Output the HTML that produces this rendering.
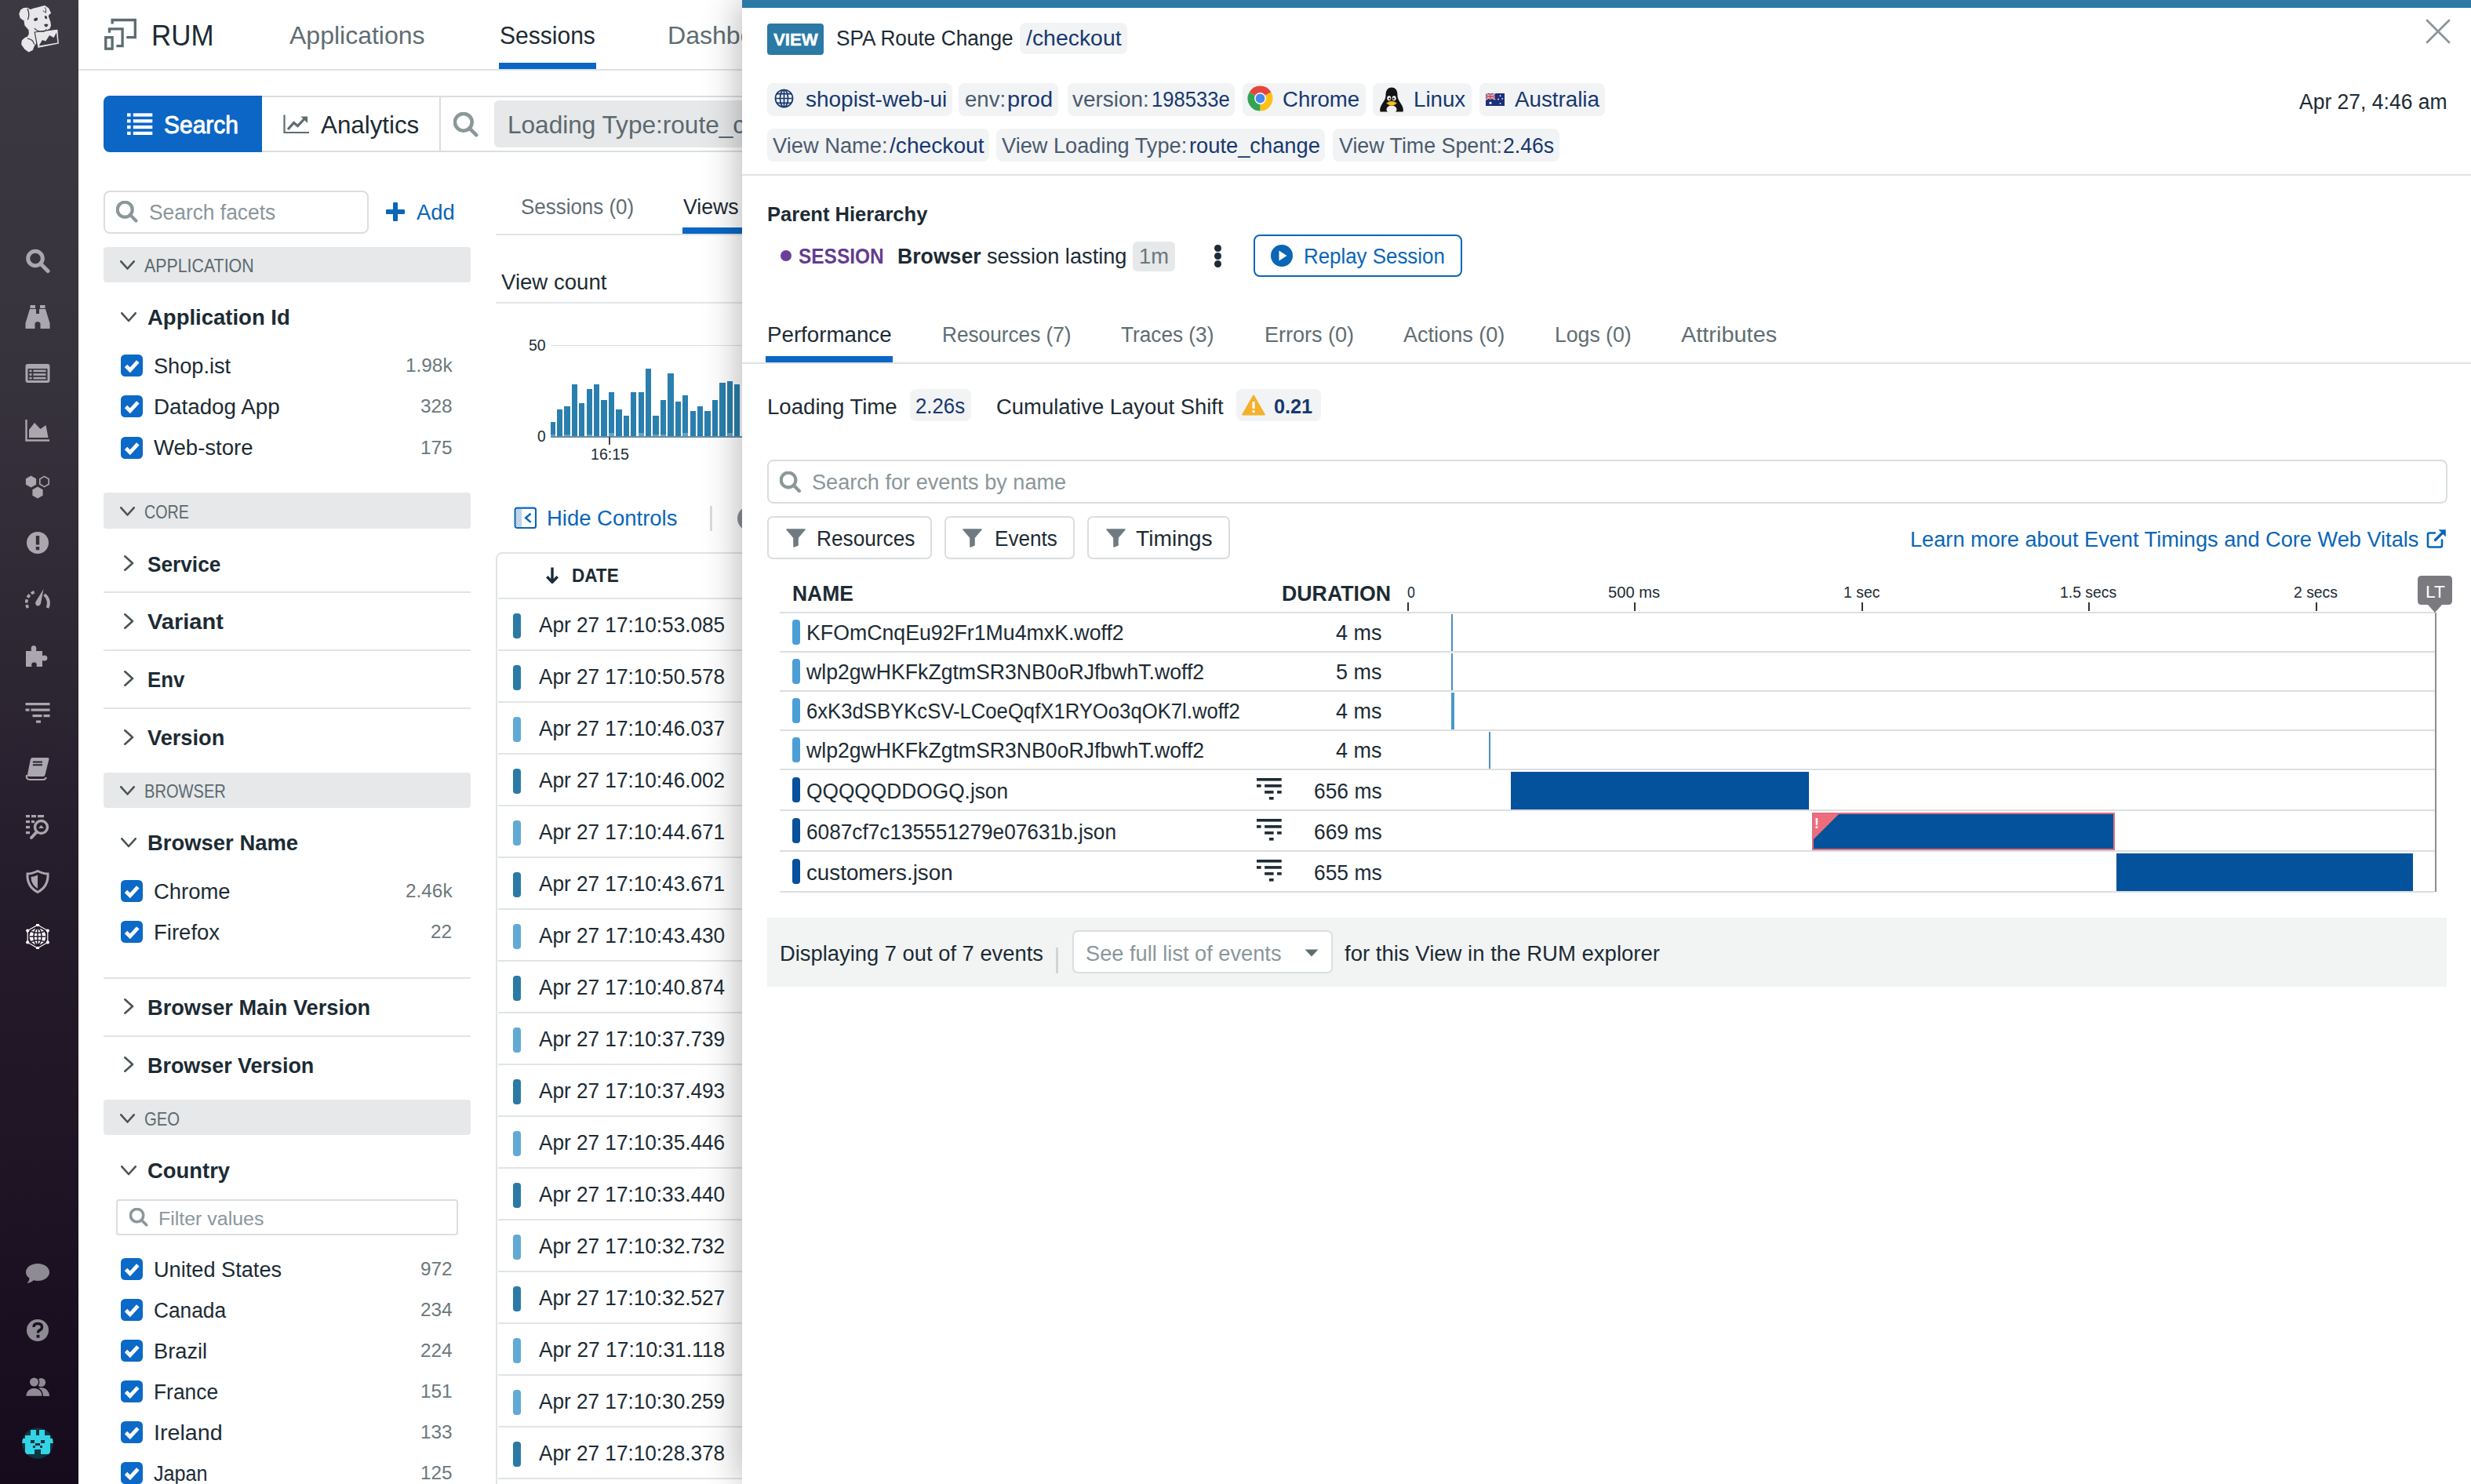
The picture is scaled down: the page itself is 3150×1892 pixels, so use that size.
<!DOCTYPE html>
<html lang="en"><head><meta charset="utf-8"><title>RUM Sessions</title>
<style>
html,body{margin:0;padding:0;background:#fff;}
body{width:3150px;height:1892px;position:relative;overflow:hidden;font-family:"Liberation Sans", sans-serif;}
.a{position:absolute;box-sizing:border-box;}
.t{position:absolute;white-space:nowrap;line-height:1;transform-origin:0 0;display:block;}
</style></head>
<body>
<div class="a" style="left:0px;top:0px;width:100px;height:1892px;background:linear-gradient(#3c3942 0%,#37333d 25%,#251c2b 60%,#160b1d 100%);"></div>
<div class="a" style="left:100px;top:88px;width:900px;height:2px;background:#dfe3e5;"></div>
<span class="t" style="left:192.6px;top:27.0px;font-size:37.08px;color:#1c2b34;transform:scaleX(0.9416);">RUM</span>
<span class="t" style="left:369.1px;top:31.0px;font-size:30.9px;color:#5f6d72;transform:scaleX(1.0359);">Applications</span>
<span class="t" style="left:637.1px;top:31.0px;font-size:30.9px;color:#1c2b34;transform:scaleX(0.9722);">Sessions</span>
<div class="a" style="left:636px;top:80px;width:124px;height:8px;background:#0b66c5;"></div>
<span class="t" style="left:850.6px;top:31.0px;font-size:30.9px;color:#5f6d72;transform:scaleX(1.0380);">Dashboards</span>
<div class="a" style="left:132px;top:122px;width:900px;height:72px;border:2px solid #dadee0;border-radius:8px 0 0 8px;"></div>
<div class="a" style="left:132px;top:122px;width:202px;height:72px;background:#0b66c5;border-radius:8px 0 0 8px;"></div>
<span class="t" style="left:208.7px;top:145.0px;font-size:30.9px;color:#fff;transform:scaleX(0.9700);-webkit-text-stroke:0.9px #fff;">Search</span>
<span class="t" style="left:409.0px;top:145.0px;font-size:30.9px;color:#1c2b34;transform:scaleX(1.0133);">Analytics</span>
<div class="a" style="left:560px;top:124px;width:2px;height:68px;background:#dadee0;"></div>
<div class="a" style="left:630px;top:128px;width:400px;height:60px;background:#e6e8e9;border-radius:6px;"></div>
<span class="t" style="left:646.8px;top:145.0px;font-size:30.9px;color:#5c6970;transform:scaleX(1.0220);">Loading Type:route_change</span>
<div class="a" style="left:132px;top:242.5px;width:337.5px;height:55px;background:#fff;border:2px solid #dadee0;border-radius:8px;"></div>
<span class="t" style="left:190.0px;top:258.0px;font-size:26.78px;color:#8b969a;transform:scaleX(0.9850);">Search facets</span>
<span class="t" style="left:530.8px;top:258.0px;font-size:26.78px;color:#0a66b7;transform:scaleX(1.0227);">Add</span>
<div class="a" style="left:132px;top:314.5px;width:468px;height:45.3px;background:#e6e8e9;border-radius:4px;"></div>
<span class="t" style="left:183.9px;top:328.0px;font-size:23.18px;color:#5c6970;transform:scaleX(0.9213);">APPLICATION</span>
<svg class="a" style="left:152.5px;top:332px;" width="19" height="12" viewBox="0 0 19 12"><path d="M1.3 1.3 L9.5 10.5 L17.7 1.3" fill="none" stroke="#4a5459" stroke-width="2.6" stroke-linecap="round" stroke-linejoin="round"/></svg>
<span class="t" style="left:187.5px;top:392.0px;font-size:26.78px;color:#1c2b34;font-weight:700;transform:scaleX(1.0274);">Application Id</span>
<svg class="a" style="left:154px;top:398.1px;" width="20" height="12.5" viewBox="0 0 20 12.5"><path d="M1.3 1.3 L10 11 L18.7 1.3" fill="none" stroke="#4a5459" stroke-width="2.6" stroke-linecap="round" stroke-linejoin="round"/></svg>
<div class="a" style="left:154px;top:452px;width:28px;height:28px;background:#0b69c7;border-radius:5.5px;"></div>
<svg class="a" style="left:154px;top:452px;" width="28" height="28" viewBox="0 0 28 28"><path d="M6.5 14.5 L11.8 19.8 L21.8 8.8" fill="none" stroke="#fff" stroke-width="4.8" stroke-linecap="butt" stroke-linejoin="miter"/></svg>
<span class="t" style="left:195.7px;top:454.0px;font-size:26.78px;color:#1c2b34;transform:scaleX(1.0144);">Shop.ist</span>
<span class="t" style="left:516.7px;top:454.0px;font-size:24.72px;color:#6b777c;transform:scaleX(0.9850);">1.98k</span>
<div class="a" style="left:154px;top:504px;width:28px;height:28px;background:#0b69c7;border-radius:5.5px;"></div>
<svg class="a" style="left:154px;top:504px;" width="28" height="28" viewBox="0 0 28 28"><path d="M6.5 14.5 L11.8 19.8 L21.8 8.8" fill="none" stroke="#fff" stroke-width="4.8" stroke-linecap="butt" stroke-linejoin="miter"/></svg>
<span class="t" style="left:195.7px;top:506.0px;font-size:26.78px;color:#1c2b34;transform:scaleX(1.0376);">Datadog App</span>
<span class="t" style="left:535.6px;top:506.0px;font-size:24.72px;color:#6b777c;transform:scaleX(0.9850);">328</span>
<div class="a" style="left:154px;top:556.5px;width:28px;height:28px;background:#0b69c7;border-radius:5.5px;"></div>
<svg class="a" style="left:154px;top:556.5px;" width="28" height="28" viewBox="0 0 28 28"><path d="M6.5 14.5 L11.8 19.8 L21.8 8.8" fill="none" stroke="#fff" stroke-width="4.8" stroke-linecap="butt" stroke-linejoin="miter"/></svg>
<span class="t" style="left:195.7px;top:558.0px;font-size:26.78px;color:#1c2b34;transform:scaleX(1.0296);">Web-store</span>
<span class="t" style="left:535.6px;top:559.0px;font-size:24.72px;color:#6b777c;transform:scaleX(0.9850);">175</span>
<div class="a" style="left:132px;top:628.3px;width:468px;height:45.3px;background:#e6e8e9;border-radius:4px;"></div>
<span class="t" style="left:183.9px;top:642.0px;font-size:23.18px;color:#5c6970;transform:scaleX(0.8482);">CORE</span>
<svg class="a" style="left:152.5px;top:645.8px;" width="19" height="12" viewBox="0 0 19 12"><path d="M1.3 1.3 L9.5 10.5 L17.7 1.3" fill="none" stroke="#4a5459" stroke-width="2.6" stroke-linecap="round" stroke-linejoin="round"/></svg>
<span class="t" style="left:187.5px;top:707.0px;font-size:26.78px;color:#1c2b34;font-weight:700;transform:scaleX(0.9796);">Service</span>
<svg class="a" style="left:158.3px;top:708px;" width="12.5" height="20" viewBox="0 0 12.5 20"><path d="M1.3 1.3 L11 10 L1.3 18.7" fill="none" stroke="#4a5459" stroke-width="2.6" stroke-linecap="round" stroke-linejoin="round"/></svg>
<div class="a" style="left:132px;top:754px;width:468px;height:2px;background:#e0e4e6;"></div>
<span class="t" style="left:187.5px;top:780.0px;font-size:26.78px;color:#1c2b34;font-weight:700;transform:scaleX(1.0845);">Variant</span>
<svg class="a" style="left:158.3px;top:781.5px;" width="12.5" height="20" viewBox="0 0 12.5 20"><path d="M1.3 1.3 L11 10 L1.3 18.7" fill="none" stroke="#4a5459" stroke-width="2.6" stroke-linecap="round" stroke-linejoin="round"/></svg>
<div class="a" style="left:132px;top:828px;width:468px;height:2px;background:#e0e4e6;"></div>
<span class="t" style="left:187.5px;top:854.0px;font-size:26.78px;color:#1c2b34;font-weight:700;transform:scaleX(0.9636);">Env</span>
<svg class="a" style="left:158.3px;top:855px;" width="12.5" height="20" viewBox="0 0 12.5 20"><path d="M1.3 1.3 L11 10 L1.3 18.7" fill="none" stroke="#4a5459" stroke-width="2.6" stroke-linecap="round" stroke-linejoin="round"/></svg>
<div class="a" style="left:132px;top:902px;width:468px;height:2px;background:#e0e4e6;"></div>
<span class="t" style="left:187.5px;top:928.0px;font-size:26.78px;color:#1c2b34;font-weight:700;transform:scaleX(1.0166);">Version</span>
<svg class="a" style="left:158.3px;top:929.7px;" width="12.5" height="20" viewBox="0 0 12.5 20"><path d="M1.3 1.3 L11 10 L1.3 18.7" fill="none" stroke="#4a5459" stroke-width="2.6" stroke-linecap="round" stroke-linejoin="round"/></svg>
<div class="a" style="left:132px;top:984.5px;width:468px;height:45.3px;background:#e6e8e9;border-radius:4px;"></div>
<span class="t" style="left:183.9px;top:998.0px;font-size:23.18px;color:#5c6970;transform:scaleX(0.8668);">BROWSER</span>
<svg class="a" style="left:152.5px;top:1002px;" width="19" height="12" viewBox="0 0 19 12"><path d="M1.3 1.3 L9.5 10.5 L17.7 1.3" fill="none" stroke="#4a5459" stroke-width="2.6" stroke-linecap="round" stroke-linejoin="round"/></svg>
<span class="t" style="left:187.5px;top:1062.0px;font-size:26.78px;color:#1c2b34;font-weight:700;transform:scaleX(1.0248);">Browser Name</span>
<svg class="a" style="left:154px;top:1068.1px;" width="20" height="12.5" viewBox="0 0 20 12.5"><path d="M1.3 1.3 L10 11 L18.7 1.3" fill="none" stroke="#4a5459" stroke-width="2.6" stroke-linecap="round" stroke-linejoin="round"/></svg>
<div class="a" style="left:154px;top:1122px;width:28px;height:28px;background:#0b69c7;border-radius:5.5px;"></div>
<svg class="a" style="left:154px;top:1122px;" width="28" height="28" viewBox="0 0 28 28"><path d="M6.5 14.5 L11.8 19.8 L21.8 8.8" fill="none" stroke="#fff" stroke-width="4.8" stroke-linecap="butt" stroke-linejoin="miter"/></svg>
<span class="t" style="left:195.7px;top:1124.0px;font-size:26.78px;color:#1c2b34;transform:scaleX(1.0252);">Chrome</span>
<span class="t" style="left:516.7px;top:1124.0px;font-size:24.72px;color:#6b777c;transform:scaleX(0.9850);">2.46k</span>
<div class="a" style="left:154px;top:1174px;width:28px;height:28px;background:#0b69c7;border-radius:5.5px;"></div>
<svg class="a" style="left:154px;top:1174px;" width="28" height="28" viewBox="0 0 28 28"><path d="M6.5 14.5 L11.8 19.8 L21.8 8.8" fill="none" stroke="#fff" stroke-width="4.8" stroke-linecap="butt" stroke-linejoin="miter"/></svg>
<span class="t" style="left:195.7px;top:1176.0px;font-size:26.78px;color:#1c2b34;transform:scaleX(1.0280);">Firefox</span>
<span class="t" style="left:549.2px;top:1176.0px;font-size:24.72px;color:#6b777c;transform:scaleX(0.9850);">22</span>
<div class="a" style="left:132px;top:1246px;width:468px;height:2px;background:#e0e4e6;"></div>
<span class="t" style="left:187.5px;top:1272.0px;font-size:26.78px;color:#1c2b34;font-weight:700;transform:scaleX(1.0163);">Browser Main Version</span>
<svg class="a" style="left:158.3px;top:1273px;" width="12.5" height="20" viewBox="0 0 12.5 20"><path d="M1.3 1.3 L11 10 L1.3 18.7" fill="none" stroke="#4a5459" stroke-width="2.6" stroke-linecap="round" stroke-linejoin="round"/></svg>
<div class="a" style="left:132px;top:1320px;width:468px;height:2px;background:#e0e4e6;"></div>
<span class="t" style="left:187.5px;top:1346.0px;font-size:26.78px;color:#1c2b34;font-weight:700;transform:scaleX(1.0050);">Browser Version</span>
<svg class="a" style="left:158.3px;top:1347px;" width="12.5" height="20" viewBox="0 0 12.5 20"><path d="M1.3 1.3 L11 10 L1.3 18.7" fill="none" stroke="#4a5459" stroke-width="2.6" stroke-linecap="round" stroke-linejoin="round"/></svg>
<div class="a" style="left:132px;top:1402px;width:468px;height:45.3px;background:#e6e8e9;border-radius:4px;"></div>
<span class="t" style="left:183.9px;top:1416.0px;font-size:23.18px;color:#5c6970;transform:scaleX(0.8772);">GEO</span>
<svg class="a" style="left:152.5px;top:1419.5px;" width="19" height="12" viewBox="0 0 19 12"><path d="M1.3 1.3 L9.5 10.5 L17.7 1.3" fill="none" stroke="#4a5459" stroke-width="2.6" stroke-linecap="round" stroke-linejoin="round"/></svg>
<span class="t" style="left:187.5px;top:1480.0px;font-size:26.78px;color:#1c2b34;font-weight:700;transform:scaleX(1.0245);">Country</span>
<svg class="a" style="left:154px;top:1486.1px;" width="20" height="12.5" viewBox="0 0 20 12.5"><path d="M1.3 1.3 L10 11 L18.7 1.3" fill="none" stroke="#4a5459" stroke-width="2.6" stroke-linecap="round" stroke-linejoin="round"/></svg>
<div class="a" style="left:148px;top:1528.5px;width:435.5px;height:46.5px;background:#fff;border:2px solid #dadee0;border-radius:4px;"></div>
<span class="t" style="left:202.1px;top:1542.0px;font-size:24.72px;color:#8b969a;transform:scaleX(1.0085);">Filter values</span>
<div class="a" style="left:154px;top:1603.7px;width:28px;height:28px;background:#0b69c7;border-radius:5.5px;"></div>
<svg class="a" style="left:154px;top:1603.7px;" width="28" height="28" viewBox="0 0 28 28"><path d="M6.5 14.5 L11.8 19.8 L21.8 8.8" fill="none" stroke="#fff" stroke-width="4.8" stroke-linecap="butt" stroke-linejoin="miter"/></svg>
<span class="t" style="left:195.7px;top:1606.0px;font-size:26.78px;color:#1c2b34;transform:scaleX(1.0151);">United States</span>
<span class="t" style="left:535.6px;top:1606.0px;font-size:24.72px;color:#6b777c;transform:scaleX(0.9850);">972</span>
<div class="a" style="left:154px;top:1656px;width:28px;height:28px;background:#0b69c7;border-radius:5.5px;"></div>
<svg class="a" style="left:154px;top:1656px;" width="28" height="28" viewBox="0 0 28 28"><path d="M6.5 14.5 L11.8 19.8 L21.8 8.8" fill="none" stroke="#fff" stroke-width="4.8" stroke-linecap="butt" stroke-linejoin="miter"/></svg>
<span class="t" style="left:195.7px;top:1658.0px;font-size:26.78px;color:#1c2b34;transform:scaleX(0.9823);">Canada</span>
<span class="t" style="left:535.6px;top:1658.0px;font-size:24.72px;color:#6b777c;transform:scaleX(0.9850);">234</span>
<div class="a" style="left:154px;top:1708px;width:28px;height:28px;background:#0b69c7;border-radius:5.5px;"></div>
<svg class="a" style="left:154px;top:1708px;" width="28" height="28" viewBox="0 0 28 28"><path d="M6.5 14.5 L11.8 19.8 L21.8 8.8" fill="none" stroke="#fff" stroke-width="4.8" stroke-linecap="butt" stroke-linejoin="miter"/></svg>
<span class="t" style="left:195.7px;top:1710.0px;font-size:26.78px;color:#1c2b34;transform:scaleX(1.0175);">Brazil</span>
<span class="t" style="left:535.6px;top:1710.0px;font-size:24.72px;color:#6b777c;transform:scaleX(0.9850);">224</span>
<div class="a" style="left:154px;top:1760px;width:28px;height:28px;background:#0b69c7;border-radius:5.5px;"></div>
<svg class="a" style="left:154px;top:1760px;" width="28" height="28" viewBox="0 0 28 28"><path d="M6.5 14.5 L11.8 19.8 L21.8 8.8" fill="none" stroke="#fff" stroke-width="4.8" stroke-linecap="butt" stroke-linejoin="miter"/></svg>
<span class="t" style="left:195.7px;top:1762.0px;font-size:26.78px;color:#1c2b34;transform:scaleX(0.9855);">France</span>
<span class="t" style="left:535.6px;top:1762.0px;font-size:24.72px;color:#6b777c;transform:scaleX(0.9850);">151</span>
<div class="a" style="left:154px;top:1812px;width:28px;height:28px;background:#0b69c7;border-radius:5.5px;"></div>
<svg class="a" style="left:154px;top:1812px;" width="28" height="28" viewBox="0 0 28 28"><path d="M6.5 14.5 L11.8 19.8 L21.8 8.8" fill="none" stroke="#fff" stroke-width="4.8" stroke-linecap="butt" stroke-linejoin="miter"/></svg>
<span class="t" style="left:195.7px;top:1814.0px;font-size:26.78px;color:#1c2b34;transform:scaleX(1.0704);">Ireland</span>
<span class="t" style="left:535.6px;top:1814.0px;font-size:24.72px;color:#6b777c;transform:scaleX(0.9850);">133</span>
<div class="a" style="left:154px;top:1864px;width:28px;height:28px;background:#0b69c7;border-radius:5.5px;"></div>
<svg class="a" style="left:154px;top:1864px;" width="28" height="28" viewBox="0 0 28 28"><path d="M6.5 14.5 L11.8 19.8 L21.8 8.8" fill="none" stroke="#fff" stroke-width="4.8" stroke-linecap="butt" stroke-linejoin="miter"/></svg>
<span class="t" style="left:195.7px;top:1866.0px;font-size:26.78px;color:#1c2b34;transform:scaleX(0.9406);">Japan</span>
<span class="t" style="left:535.6px;top:1866.0px;font-size:24.72px;color:#6b777c;transform:scaleX(0.9850);">125</span>
<span class="t" style="left:663.7px;top:251.0px;font-size:26.78px;color:#5f6d72;transform:scaleX(0.9687);">Sessions (0)</span>
<span class="t" style="left:871.2px;top:251.0px;font-size:26.78px;color:#1c2b34;transform:scaleX(0.9956);">Views</span>
<div class="a" style="left:632px;top:298px;width:400px;height:2px;background:#dfe3e5;"></div>
<div class="a" style="left:870px;top:290px;width:160px;height:8px;background:#0b66c5;"></div>
<span class="t" style="left:639.4px;top:347.0px;font-size:26.78px;color:#1c2b34;transform:scaleX(1.0303);">View count</span>
<div class="a" style="left:632px;top:384.5px;width:400px;height:2px;background:#e4e7e9;"></div>
<span class="t" style="left:674.2px;top:431.0px;font-size:19.57px;color:#1c2b34;transform:scaleX(0.9958);">50</span>
<span class="t" style="left:685.2px;top:547.0px;font-size:19.57px;color:#1c2b34;transform:scaleX(0.9801);">0</span>
<span class="t" style="left:752.6px;top:570.0px;font-size:19.57px;color:#1c2b34;transform:scaleX(1.0001);">16:15</span>
<div class="a" style="left:702px;top:440px;width:330px;height:1px;background:#dcdfe1;"></div>
<div class="a" style="left:702px;top:556px;width:330px;height:1.5px;background:#6b8ea3;"></div>
<div class="a" style="left:776px;top:557px;width:1.5px;height:10px;background:#444;"></div>
<div class="a" style="left:702.00px;top:538.2px;width:5.70px;height:18.2px;background:#2a7fae"></div><div class="a" style="left:702.00px;top:554.4px;width:5.70px;height:2px;background:#5ea3cb"></div><div class="a" style="left:709.83px;top:522.0px;width:7.30px;height:34.4px;background:#2a7fae"></div><div class="a" style="left:719.26px;top:518.1px;width:7.30px;height:38.3px;background:#2a7fae"></div><div class="a" style="left:719.26px;top:554.4px;width:7.30px;height:2px;background:#5ea3cb"></div><div class="a" style="left:728.69px;top:490.1px;width:7.30px;height:66.3px;background:#2a7fae"></div><div class="a" style="left:738.12px;top:514.1px;width:7.30px;height:42.3px;background:#2a7fae"></div><div class="a" style="left:747.55px;top:496.1px;width:7.30px;height:60.3px;background:#2a7fae"></div><div class="a" style="left:747.55px;top:554.4px;width:7.30px;height:2px;background:#5ea3cb"></div><div class="a" style="left:756.98px;top:490.1px;width:7.30px;height:66.3px;background:#2a7fae"></div><div class="a" style="left:766.41px;top:510.2px;width:7.30px;height:46.2px;background:#2a7fae"></div><div class="a" style="left:775.84px;top:500.1px;width:7.30px;height:56.3px;background:#2a7fae"></div><div class="a" style="left:775.84px;top:552.4px;width:7.30px;height:4px;background:#5ea3cb"></div><div class="a" style="left:785.27px;top:522.0px;width:7.30px;height:34.4px;background:#2a7fae"></div><div class="a" style="left:794.70px;top:530.1px;width:7.30px;height:26.3px;background:#2a7fae"></div><div class="a" style="left:804.13px;top:500.1px;width:7.30px;height:56.3px;background:#2a7fae"></div><div class="a" style="left:813.56px;top:500.1px;width:7.30px;height:56.3px;background:#2a7fae"></div><div class="a" style="left:813.56px;top:552.4px;width:7.30px;height:4px;background:#5ea3cb"></div><div class="a" style="left:822.99px;top:470.1px;width:7.30px;height:86.3px;background:#2a7fae"></div><div class="a" style="left:832.42px;top:530.1px;width:7.30px;height:26.3px;background:#2a7fae"></div><div class="a" style="left:832.42px;top:554.4px;width:7.30px;height:2px;background:#5ea3cb"></div><div class="a" style="left:841.85px;top:510.2px;width:7.30px;height:46.2px;background:#2a7fae"></div><div class="a" style="left:841.85px;top:554.4px;width:7.30px;height:2px;background:#5ea3cb"></div><div class="a" style="left:851.28px;top:476.2px;width:7.30px;height:80.2px;background:#2a7fae"></div><div class="a" style="left:860.71px;top:512.1px;width:7.30px;height:44.3px;background:#2a7fae"></div><div class="a" style="left:870.14px;top:504.1px;width:7.30px;height:52.3px;background:#2a7fae"></div><div class="a" style="left:870.14px;top:552.4px;width:7.30px;height:4px;background:#5ea3cb"></div><div class="a" style="left:879.57px;top:524.0px;width:7.30px;height:32.4px;background:#2a7fae"></div><div class="a" style="left:889.00px;top:518.1px;width:7.30px;height:38.3px;background:#2a7fae"></div><div class="a" style="left:898.43px;top:524.0px;width:7.30px;height:32.4px;background:#2a7fae"></div><div class="a" style="left:907.86px;top:510.2px;width:7.30px;height:46.2px;background:#2a7fae"></div><div class="a" style="left:917.29px;top:488.1px;width:7.30px;height:68.3px;background:#2a7fae"></div><div class="a" style="left:926.72px;top:486.0px;width:7.30px;height:70.4px;background:#2a7fae"></div><div class="a" style="left:926.72px;top:552.4px;width:7.30px;height:4px;background:#5ea3cb"></div><div class="a" style="left:936.15px;top:490.1px;width:7.30px;height:66.3px;background:#2a7fae"></div><div class="a" style="left:945.58px;top:488.4px;width:7.30px;height:68.0px;background:#2a7fae"></div><div class="a" style="left:955.01px;top:492.4px;width:7.30px;height:64.0px;background:#2a7fae"></div>
<span class="t" style="left:697.2px;top:648.0px;font-size:26.78px;color:#0a66b7;transform:scaleX(1.0262);">Hide Controls</span>
<div class="a" style="left:904.5px;top:644.5px;width:3px;height:32.5px;background:#d8dcde;"></div>
<div class="a" style="left:939.5px;top:645px;width:32px;height:32px;background:#8b8f93;border-radius:16px;"></div>
<div class="a" style="left:632.3px;top:704.3px;width:420px;height:1300px;background:#fff;border:2px solid #e0e4e6;border-radius:8px 0 0 0;"></div>
<span class="t" style="left:729.1px;top:722.0px;font-size:24.72px;color:#1c2b34;font-weight:700;transform:scaleX(0.9116);">DATE</span>
<svg class="a" style="left:694.8px;top:722px;" width="18" height="24" viewBox="0 0 18 24"><path d="M9 1.4 V20 M2.3 13.3 L9 20.3 L15.7 13.3" fill="none" stroke="#1c2b34" stroke-width="3.4" stroke-linecap="butt" stroke-linejoin="round"/></svg>
<div class="a" style="left:635px;top:762px;width:420px;height:2px;background:#e0e4e6;"></div>
<div class="a" style="left:654.4px;top:782px;width:9.6px;height:31.7px;background:#2a7aa6;border-radius:4px;"></div>
<span class="t" style="left:687.2px;top:784.0px;font-size:26.78px;color:#1c2b34;transform:scaleX(0.9774);">Apr 27 17:10:53.085</span>
<div class="a" style="left:635px;top:828px;width:420px;height:2px;background:#e0e4e6;"></div>
<div class="a" style="left:654.4px;top:848px;width:9.6px;height:31.7px;background:#2a7aa6;border-radius:4px;"></div>
<span class="t" style="left:687.2px;top:850.0px;font-size:26.78px;color:#1c2b34;transform:scaleX(0.9774);">Apr 27 17:10:50.578</span>
<div class="a" style="left:635px;top:894px;width:420px;height:2px;background:#e0e4e6;"></div>
<div class="a" style="left:654.4px;top:914px;width:9.6px;height:31.7px;background:#62aad6;border-radius:4px;"></div>
<span class="t" style="left:687.2px;top:916.0px;font-size:26.78px;color:#1c2b34;transform:scaleX(0.9774);">Apr 27 17:10:46.037</span>
<div class="a" style="left:635px;top:960px;width:420px;height:2px;background:#e0e4e6;"></div>
<div class="a" style="left:654.4px;top:980px;width:9.6px;height:31.7px;background:#2a7aa6;border-radius:4px;"></div>
<span class="t" style="left:687.2px;top:982.0px;font-size:26.78px;color:#1c2b34;transform:scaleX(0.9774);">Apr 27 17:10:46.002</span>
<div class="a" style="left:635px;top:1026px;width:420px;height:2px;background:#e0e4e6;"></div>
<div class="a" style="left:654.4px;top:1046px;width:9.6px;height:31.7px;background:#62aad6;border-radius:4px;"></div>
<span class="t" style="left:687.2px;top:1048.0px;font-size:26.78px;color:#1c2b34;transform:scaleX(0.9774);">Apr 27 17:10:44.671</span>
<div class="a" style="left:635px;top:1092px;width:420px;height:2px;background:#e0e4e6;"></div>
<div class="a" style="left:654.4px;top:1112px;width:9.6px;height:31.7px;background:#2a7aa6;border-radius:4px;"></div>
<span class="t" style="left:687.2px;top:1114.0px;font-size:26.78px;color:#1c2b34;transform:scaleX(0.9774);">Apr 27 17:10:43.671</span>
<div class="a" style="left:635px;top:1158px;width:420px;height:2px;background:#e0e4e6;"></div>
<div class="a" style="left:654.4px;top:1178px;width:9.6px;height:31.7px;background:#62aad6;border-radius:4px;"></div>
<span class="t" style="left:687.2px;top:1180.0px;font-size:26.78px;color:#1c2b34;transform:scaleX(0.9774);">Apr 27 17:10:43.430</span>
<div class="a" style="left:635px;top:1224px;width:420px;height:2px;background:#e0e4e6;"></div>
<div class="a" style="left:654.4px;top:1244px;width:9.6px;height:31.7px;background:#2a7aa6;border-radius:4px;"></div>
<span class="t" style="left:687.2px;top:1246.0px;font-size:26.78px;color:#1c2b34;transform:scaleX(0.9774);">Apr 27 17:10:40.874</span>
<div class="a" style="left:635px;top:1290px;width:420px;height:2px;background:#e0e4e6;"></div>
<div class="a" style="left:654.4px;top:1310px;width:9.6px;height:31.7px;background:#62aad6;border-radius:4px;"></div>
<span class="t" style="left:687.2px;top:1312.0px;font-size:26.78px;color:#1c2b34;transform:scaleX(0.9774);">Apr 27 17:10:37.739</span>
<div class="a" style="left:635px;top:1356px;width:420px;height:2px;background:#e0e4e6;"></div>
<div class="a" style="left:654.4px;top:1376px;width:9.6px;height:31.7px;background:#2a7aa6;border-radius:4px;"></div>
<span class="t" style="left:687.2px;top:1378.0px;font-size:26.78px;color:#1c2b34;transform:scaleX(0.9774);">Apr 27 17:10:37.493</span>
<div class="a" style="left:635px;top:1422px;width:420px;height:2px;background:#e0e4e6;"></div>
<div class="a" style="left:654.4px;top:1442px;width:9.6px;height:31.7px;background:#62aad6;border-radius:4px;"></div>
<span class="t" style="left:687.2px;top:1444.0px;font-size:26.78px;color:#1c2b34;transform:scaleX(0.9774);">Apr 27 17:10:35.446</span>
<div class="a" style="left:635px;top:1488px;width:420px;height:2px;background:#e0e4e6;"></div>
<div class="a" style="left:654.4px;top:1508px;width:9.6px;height:31.7px;background:#2a7aa6;border-radius:4px;"></div>
<span class="t" style="left:687.2px;top:1510.0px;font-size:26.78px;color:#1c2b34;transform:scaleX(0.9774);">Apr 27 17:10:33.440</span>
<div class="a" style="left:635px;top:1554px;width:420px;height:2px;background:#e0e4e6;"></div>
<div class="a" style="left:654.4px;top:1574px;width:9.6px;height:31.7px;background:#62aad6;border-radius:4px;"></div>
<span class="t" style="left:687.2px;top:1576.0px;font-size:26.78px;color:#1c2b34;transform:scaleX(0.9774);">Apr 27 17:10:32.732</span>
<div class="a" style="left:635px;top:1620px;width:420px;height:2px;background:#e0e4e6;"></div>
<div class="a" style="left:654.4px;top:1640px;width:9.6px;height:31.7px;background:#2a7aa6;border-radius:4px;"></div>
<span class="t" style="left:687.2px;top:1642.0px;font-size:26.78px;color:#1c2b34;transform:scaleX(0.9774);">Apr 27 17:10:32.527</span>
<div class="a" style="left:635px;top:1686px;width:420px;height:2px;background:#e0e4e6;"></div>
<div class="a" style="left:654.4px;top:1706px;width:9.6px;height:31.7px;background:#62aad6;border-radius:4px;"></div>
<span class="t" style="left:687.2px;top:1708.0px;font-size:26.78px;color:#1c2b34;transform:scaleX(0.9855);">Apr 27 17:10:31.118</span>
<div class="a" style="left:635px;top:1752px;width:420px;height:2px;background:#e0e4e6;"></div>
<div class="a" style="left:654.4px;top:1772px;width:9.6px;height:31.7px;background:#62aad6;border-radius:4px;"></div>
<span class="t" style="left:687.2px;top:1774.0px;font-size:26.78px;color:#1c2b34;transform:scaleX(0.9774);">Apr 27 17:10:30.259</span>
<div class="a" style="left:635px;top:1818px;width:420px;height:2px;background:#e0e4e6;"></div>
<div class="a" style="left:654.4px;top:1838px;width:9.6px;height:31.7px;background:#2a7aa6;border-radius:4px;"></div>
<span class="t" style="left:687.2px;top:1840.0px;font-size:26.78px;color:#1c2b34;transform:scaleX(0.9774);">Apr 27 17:10:28.378</span>
<div class="a" style="left:635px;top:1884px;width:420px;height:2px;background:#e0e4e6;"></div>
<div class="a" style="left:654.4px;top:1904px;width:9.6px;height:31.7px;background:#62aad6;border-radius:4px;"></div>
<span class="t" style="left:687.2px;top:1906.0px;font-size:26.78px;color:#1c2b34;transform:scaleX(0.9774);">Apr 27 17:10:27.001</span>
<div class="a" style="left:946px;top:0px;width:2204px;height:1892px;background:#fff;box-shadow:-2px 0 44px rgba(0,0,0,.30);"></div>
<div class="a" style="left:946px;top:0px;width:2204px;height:10px;background:#2a7aa5;"></div>
<div class="a" style="left:978px;top:30px;width:72px;height:40px;background:#2a7aa5;border-radius:4px;"></div>
<span class="t" style="left:985.8px;top:39.0px;font-size:22.66px;color:#fff;font-weight:700;transform:scaleX(0.9819);-webkit-text-stroke:0.5px #fff;">VIEW</span>
<span class="t" style="left:1066.2px;top:36.0px;font-size:26.78px;color:#1c2b34;transform:scaleX(0.9802);">SPA Route Change</span>
<div class="a" style="left:1300px;top:28.5px;width:137px;height:40.5px;background:#f1f3f4;border-radius:8px;"></div>
<span class="t" style="left:1308.2px;top:36.0px;font-size:26.78px;color:#17386f;transform:scaleX(1.0613);">/checkout</span>
<svg class="a" style="left:3091px;top:23px;" width="34" height="34" viewBox="0 0 34 34"><path d="M3 3 L31 31 M31 3 L3 31" stroke="#8a9599" stroke-width="2.8" fill="none" stroke-linecap="round"/></svg>
<div class="a" style="left:978px;top:106px;width:235.8px;height:41.6px;background:#f1f3f4;border-radius:8px;"></div>
<span class="t" style="left:1026.5px;top:114.0px;font-size:26.78px;color:#17386f;transform:scaleX(1.0448);">shopist-web-ui</span>
<div class="a" style="left:1222.4px;top:106px;width:127.1px;height:41.6px;background:#f1f3f4;border-radius:8px;"></div>
<span class="t" style="left:1230.2px;top:114.0px;font-size:26.78px;color:#4a5a6e;transform:scaleX(1.0299);">env:</span>
<span class="t" style="left:1284.2px;top:114.0px;font-size:26.78px;color:#17386f;transform:scaleX(1.0845);">prod</span>
<div class="a" style="left:1360.5px;top:106px;width:213.3px;height:41.6px;background:#f1f3f4;border-radius:8px;"></div>
<span class="t" style="left:1367.0px;top:114.0px;font-size:26.78px;color:#4a5a6e;transform:scaleX(1.0434);">version:</span>
<span class="t" style="left:1467.7px;top:114.0px;font-size:26.78px;color:#17386f;transform:scaleX(0.9559);">198533e</span>
<div class="a" style="left:1584.4px;top:106px;width:157px;height:41.6px;background:#f1f3f4;border-radius:8px;"></div>
<span class="t" style="left:1635.2px;top:114.0px;font-size:26.78px;color:#17386f;transform:scaleX(1.0305);">Chrome</span>
<div class="a" style="left:1750px;top:106px;width:126.4px;height:41.6px;background:#f1f3f4;border-radius:8px;"></div>
<span class="t" style="left:1802.2px;top:114.0px;font-size:26.78px;color:#17386f;transform:scaleX(1.0345);">Linux</span>
<div class="a" style="left:1886px;top:106px;width:160.4px;height:41.6px;background:#f1f3f4;border-radius:8px;"></div>
<span class="t" style="left:1930.9px;top:114.0px;font-size:26.78px;color:#17386f;transform:scaleX(1.0362);">Australia</span>
<span class="t" style="left:2931.2px;top:117.0px;font-size:26.78px;color:#1c2b34;transform:scaleX(0.9903);">Apr 27, 4:46 am</span>
<div class="a" style="left:978px;top:164px;width:283px;height:42px;background:#f1f3f4;border-radius:8px;"></div>
<span class="t" style="left:985.0px;top:173.0px;font-size:26.78px;color:#4a5a6e;transform:scaleX(1.0194);">View Name:</span>
<span class="t" style="left:1134.2px;top:173.0px;font-size:26.78px;color:#17386f;transform:scaleX(1.0526);">/checkout</span>
<div class="a" style="left:1270px;top:164px;width:419px;height:42px;background:#f1f3f4;border-radius:8px;"></div>
<span class="t" style="left:1277.0px;top:173.0px;font-size:26.78px;color:#4a5a6e;transform:scaleX(1.0153);">View Loading Type:</span>
<span class="t" style="left:1515.6px;top:173.0px;font-size:26.78px;color:#17386f;transform:scaleX(1.0195);">route_change</span>
<div class="a" style="left:1698.6px;top:164px;width:289px;height:42px;background:#f1f3f4;border-radius:8px;"></div>
<span class="t" style="left:1706.8px;top:173.0px;font-size:26.78px;color:#4a5a6e;transform:scaleX(1.0010);">View Time Spent:</span>
<span class="t" style="left:1915.6px;top:173.0px;font-size:26.78px;color:#17386f;transform:scaleX(0.9927);">2.46s</span>
<div class="a" style="left:946px;top:222px;width:2204px;height:2px;background:#dfe2e4;"></div>
<span class="t" style="left:978.0px;top:261.0px;font-size:25.75px;color:#1c2b34;font-weight:700;transform:scaleX(0.9914);">Parent Hierarchy</span>
<div class="a" style="left:994.8px;top:319px;width:14.2px;height:14.2px;background:#6a3f9a;border-radius:8px;"></div>
<span class="t" style="left:1018.2px;top:314.0px;font-size:26.78px;color:#633c8f;font-weight:700;transform:scaleX(0.9127);">SESSION</span>
<span class="t" style="left:1144.2px;top:314.0px;font-size:26.78px;color:#1c2b34;font-weight:700;transform:scaleX(0.9953);">Browser</span>
<span class="t" style="left:1257.8px;top:314.0px;font-size:26.78px;color:#1c2b34;transform:scaleX(1.0168);">session lasting</span>
<div class="a" style="left:1444px;top:308.3px;width:53.5px;height:37.4px;background:#e6e8e9;border-radius:6px;"></div>
<span class="t" style="left:1451.9px;top:314.0px;font-size:26.78px;color:#6b777c;transform:scaleX(1.0193);">1m</span>
<div class="a" style="left:1548px;top:312px;width:8.6px;height:8.6px;background:#1c2b34;border-radius:5px;"></div>
<div class="a" style="left:1548px;top:322px;width:8.6px;height:8.6px;background:#1c2b34;border-radius:5px;"></div>
<div class="a" style="left:1548px;top:332px;width:8.6px;height:8.6px;background:#1c2b34;border-radius:5px;"></div>
<div class="a" style="left:1598.4px;top:298.7px;width:265.6px;height:54.7px;background:#fff;border:2.5px solid #0a66b7;border-radius:8px;"></div>
<svg class="a" style="left:1620px;top:312px;" width="28" height="28" viewBox="0 0 28 28"><circle cx="14" cy="14" r="14" fill="#0a66b7"/><path d="M10.5 7.5 L20.5 14 L10.5 20.5 Z" fill="#fff"/></svg>
<span class="t" style="left:1662.0px;top:314.0px;font-size:26.78px;color:#0a66b7;transform:scaleX(0.9668);">Replay Session</span>
<span class="t" style="left:978.0px;top:414.0px;font-size:26.78px;color:#1c2b34;transform:scaleX(1.0351);">Performance</span>
<span class="t" style="left:1201.0px;top:414.0px;font-size:26.78px;color:#5f6d72;transform:scaleX(0.9793);">Resources (7)</span>
<span class="t" style="left:1429.0px;top:414.0px;font-size:26.78px;color:#5f6d72;transform:scaleX(0.9788);">Traces (3)</span>
<span class="t" style="left:1611.5px;top:414.0px;font-size:26.78px;color:#5f6d72;transform:scaleX(1.0097);">Errors (0)</span>
<span class="t" style="left:1789.2px;top:414.0px;font-size:26.78px;color:#5f6d72;transform:scaleX(1.0108);">Actions (0)</span>
<span class="t" style="left:1982.2px;top:414.0px;font-size:26.78px;color:#5f6d72;transform:scaleX(0.9939);">Logs (0)</span>
<span class="t" style="left:2143.0px;top:414.0px;font-size:26.78px;color:#5f6d72;transform:scaleX(1.0809);">Attributes</span>
<div class="a" style="left:946px;top:462px;width:2204px;height:2px;background:#dfe3e5;"></div>
<div class="a" style="left:976px;top:454px;width:162px;height:8px;background:#0b66c5;"></div>
<span class="t" style="left:978.1px;top:506.0px;font-size:26.78px;color:#1c2b34;transform:scaleX(1.0311);">Loading Time</span>
<div class="a" style="left:1160px;top:496.4px;width:77.7px;height:40.6px;background:#f1f3f4;border-radius:8px;"></div>
<span class="t" style="left:1167.2px;top:505.0px;font-size:26.78px;color:#17386f;transform:scaleX(0.9637);">2.26s</span>
<span class="t" style="left:1270.2px;top:506.0px;font-size:26.78px;color:#1c2b34;transform:scaleX(1.0245);">Cumulative Layout Shift</span>
<div class="a" style="left:1576px;top:496.4px;width:107.6px;height:40.6px;background:#f1f3f4;border-radius:8px;"></div>
<svg class="a" style="left:1583px;top:503px;" width="30" height="27" viewBox="0 0 30 27"><path d="M15 1.5 L28.8 25.5 H1.2 Z" fill="#f5b12b" stroke="#f5b12b" stroke-width="2" stroke-linejoin="round"/><rect x="13.4" y="9" width="3.2" height="9" rx="1" fill="#fff"/><rect x="13.4" y="20" width="3.2" height="3.2" rx="1" fill="#fff"/></svg>
<span class="t" style="left:1624.0px;top:506.0px;font-size:25.75px;color:#17386f;font-weight:700;transform:scaleX(0.9804);">0.21</span>
<div class="a" style="left:978px;top:586px;width:2142px;height:55.5px;background:#fff;border:2px solid #dadee0;border-radius:8px;"></div>
<span class="t" style="left:1035.2px;top:602.0px;font-size:26.78px;color:#8b969a;transform:scaleX(1.0135);">Search for events by name</span>
<div class="a" style="left:978.2px;top:658.2px;width:209.5px;height:55.3px;background:#fff;border:2px solid #dadee0;border-radius:7px;"></div>
<svg class="a" style="left:1001.5px;top:674px;" width="25" height="24" viewBox="0 0 25 24"><path d="M1 1 H24 L15 11.5 V21 L10 23 V11.5 Z" fill="#6f7b80" stroke="#6f7b80" stroke-width="1.6" stroke-linejoin="round"/></svg>
<span class="t" style="left:1041.2px;top:674.0px;font-size:26.78px;color:#1c2b34;transform:scaleX(0.9802);">Resources</span>
<div class="a" style="left:1204px;top:658.2px;width:166px;height:55.3px;background:#fff;border:2px solid #dadee0;border-radius:7px;"></div>
<svg class="a" style="left:1227px;top:674px;" width="25" height="24" viewBox="0 0 25 24"><path d="M1 1 H24 L15 11.5 V21 L10 23 V11.5 Z" fill="#6f7b80" stroke="#6f7b80" stroke-width="1.6" stroke-linejoin="round"/></svg>
<span class="t" style="left:1268.0px;top:674.0px;font-size:26.78px;color:#1c2b34;transform:scaleX(0.9753);">Events</span>
<div class="a" style="left:1386.1px;top:658.2px;width:182.1px;height:55.3px;background:#fff;border:2px solid #dadee0;border-radius:7px;"></div>
<svg class="a" style="left:1409.5px;top:674px;" width="25" height="24" viewBox="0 0 25 24"><path d="M1 1 H24 L15 11.5 V21 L10 23 V11.5 Z" fill="#6f7b80" stroke="#6f7b80" stroke-width="1.6" stroke-linejoin="round"/></svg>
<span class="t" style="left:1448.2px;top:674.0px;font-size:26.78px;color:#1c2b34;transform:scaleX(1.0529);">Timings</span>
<span class="t" style="left:2434.9px;top:675.0px;font-size:26.78px;color:#0a66b7;transform:scaleX(1.0151);">Learn more about Event Timings and Core Web Vitals</span>
<svg class="a" style="left:3092px;top:673px;" width="28" height="27" viewBox="0 0 28 27"><path d="M21 15.5 V22.5 Q21 24.5 19 24.5 H5 Q3 24.5 3 22.5 V8.5 Q3 6.5 5 6.5 H12" fill="none" stroke="#0a66b7" stroke-width="2.6" stroke-linecap="round"/><path d="M16.5 2.2 H25.8 V11.5 Z" fill="#0a66b7"/><path d="M23 5 L12.5 15.5" stroke="#0a66b7" stroke-width="3.2" stroke-linecap="round"/></svg>
<span class="t" style="left:1009.6px;top:744.0px;font-size:26.78px;color:#1c2b34;font-weight:700;transform:scaleX(0.9885);">NAME</span>
<span class="t" style="left:1634.2px;top:744.0px;font-size:26.78px;color:#1c2b34;font-weight:700;transform:scaleX(0.9981);">DURATION</span>
<div class="a" style="left:1793.75px;top:768px;width:1.8px;height:10.5px;background:#333;"></div>
<div class="a" style="left:2083.25px;top:768px;width:1.8px;height:10.5px;background:#333;"></div>
<div class="a" style="left:2372.75px;top:768px;width:1.8px;height:10.5px;background:#333;"></div>
<div class="a" style="left:2662.25px;top:768px;width:1.8px;height:10.5px;background:#333;"></div>
<div class="a" style="left:2951.75px;top:768px;width:1.8px;height:10.5px;background:#333;"></div>
<span class="t" style="left:1794.2px;top:746.0px;font-size:19.57px;color:#1c2b34;transform:scaleX(0.9067);">0</span>
<span class="t" style="left:2050.4px;top:746.0px;font-size:19.57px;color:#1c2b34;transform:scaleX(1.0315);">500 ms</span>
<span class="t" style="left:2350.1px;top:746.0px;font-size:19.57px;color:#1c2b34;transform:scaleX(0.9938);">1 sec</span>
<span class="t" style="left:2626.4px;top:746.0px;font-size:19.57px;color:#1c2b34;transform:scaleX(0.9906);">1.5 secs</span>
<span class="t" style="left:2924.2px;top:746.0px;font-size:19.57px;color:#1c2b34;transform:scaleX(0.9899);">2 secs</span>
<div class="a" style="left:994.4px;top:780px;width:2110px;height:2px;background:#dcdfe0;"></div>
<div class="a" style="left:3104px;top:781px;width:2px;height:356px;background:#8e8e92;"></div>
<svg class="a" style="left:3082px;top:734px;" width="44" height="48" viewBox="0 0 44 48"><path d="M5 0 H39 Q44 0 44 5 V32 Q44 37 39 37 H31 L22 47 L13 37 H5 Q0 37 0 32 V5 Q0 0 5 0 Z" fill="#7b7b7f"/></svg>
<span class="t" style="left:3091.9px;top:744.0px;font-size:21.63px;color:#fff;transform:scaleX(1.0489);">LT</span>
<div class="a" style="left:994.4px;top:830px;width:2110px;height:2px;background:#dcdfe0;"></div>
<div class="a" style="left:1010.4px;top:790.2px;width:9.2px;height:31.6px;background:#4c9fd6;border-radius:4px;"></div>
<span class="t" style="left:1027.6px;top:794.0px;font-size:26.78px;color:#1c2b34;transform:scaleX(0.9978);">KFOmCnqEu92Fr1Mu4mxK.woff2</span>
<span class="t" style="left:1703.2px;top:794.0px;font-size:26.78px;color:#1c2b34;transform:scaleX(1.0085);">4 ms</span>
<div class="a" style="left:994.4px;top:880px;width:2110px;height:2px;background:#dcdfe0;"></div>
<div class="a" style="left:1010.4px;top:840.2px;width:9.2px;height:31.6px;background:#4c9fd6;border-radius:4px;"></div>
<span class="t" style="left:1027.6px;top:844.0px;font-size:26.78px;color:#1c2b34;transform:scaleX(0.9950);">wlp2gwHKFkZgtmSR3NB0oRJfbwhT.woff2</span>
<span class="t" style="left:1703.2px;top:844.0px;font-size:26.78px;color:#1c2b34;transform:scaleX(1.0085);">5 ms</span>
<div class="a" style="left:994.4px;top:930px;width:2110px;height:2px;background:#dcdfe0;"></div>
<div class="a" style="left:1010.4px;top:890.2px;width:9.2px;height:31.6px;background:#4c9fd6;border-radius:4px;"></div>
<span class="t" style="left:1027.6px;top:894.0px;font-size:26.78px;color:#1c2b34;transform:scaleX(0.9592);">6xK3dSBYKcSV-LCoeQqfX1RYOo3qOK7l.woff2</span>
<span class="t" style="left:1703.2px;top:894.0px;font-size:26.78px;color:#1c2b34;transform:scaleX(1.0085);">4 ms</span>
<div class="a" style="left:994.4px;top:980px;width:2110px;height:2px;background:#dcdfe0;"></div>
<div class="a" style="left:1010.4px;top:940.2px;width:9.2px;height:31.6px;background:#4c9fd6;border-radius:4px;"></div>
<span class="t" style="left:1027.6px;top:944.0px;font-size:26.78px;color:#1c2b34;transform:scaleX(0.9950);">wlp2gwHKFkZgtmSR3NB0oRJfbwhT.woff2</span>
<span class="t" style="left:1703.2px;top:944.0px;font-size:26.78px;color:#1c2b34;transform:scaleX(1.0085);">4 ms</span>
<div class="a" style="left:994.4px;top:1032px;width:2110px;height:2px;background:#dcdfe0;"></div>
<div class="a" style="left:1010.4px;top:991.2px;width:9.2px;height:31.6px;background:#07509b;border-radius:4px;"></div>
<span class="t" style="left:1027.6px;top:996.0px;font-size:26.78px;color:#1c2b34;transform:scaleX(0.9823);">QQQQQDDOGQ.json</span>
<span class="t" style="left:1675.1px;top:996.0px;font-size:26.78px;color:#1c2b34;transform:scaleX(0.9866);">656 ms</span>
<svg class="a" style="left:1602.1px;top:992.2px;" width="32" height="28" viewBox="0 0 32 28"><rect x="0" y="0" width="31.7" height="3.6" fill="#1c2b34"/><rect x="0" y="8.1" width="5.6" height="3.6" fill="#1c2b34"/><rect x="10.1" y="8.1" width="21.6" height="3.6" fill="#1c2b34"/><rect x="10.1" y="16.1" width="11.5" height="3.6" fill="#1c2b34"/><rect x="26.1" y="16.1" width="5.6" height="3.6" fill="#1c2b34"/><rect x="15.9" y="24" width="5.7" height="3.6" fill="#1c2b34"/></svg>
<div class="a" style="left:994.4px;top:1084px;width:2110px;height:2px;background:#dcdfe0;"></div>
<div class="a" style="left:1010.4px;top:1043.2px;width:9.2px;height:31.6px;background:#07509b;border-radius:4px;"></div>
<span class="t" style="left:1027.6px;top:1048.0px;font-size:26.78px;color:#1c2b34;transform:scaleX(0.9793);">6087cf7c135551279e07631b.json</span>
<span class="t" style="left:1675.1px;top:1048.0px;font-size:26.78px;color:#1c2b34;transform:scaleX(0.9866);">669 ms</span>
<svg class="a" style="left:1602.1px;top:1044.2px;" width="32" height="28" viewBox="0 0 32 28"><rect x="0" y="0" width="31.7" height="3.6" fill="#1c2b34"/><rect x="0" y="8.1" width="5.6" height="3.6" fill="#1c2b34"/><rect x="10.1" y="8.1" width="21.6" height="3.6" fill="#1c2b34"/><rect x="10.1" y="16.1" width="11.5" height="3.6" fill="#1c2b34"/><rect x="26.1" y="16.1" width="5.6" height="3.6" fill="#1c2b34"/><rect x="15.9" y="24" width="5.7" height="3.6" fill="#1c2b34"/></svg>
<div class="a" style="left:994.4px;top:1136px;width:2110px;height:2px;background:#dcdfe0;"></div>
<div class="a" style="left:1010.4px;top:1095.2px;width:9.2px;height:31.6px;background:#07509b;border-radius:4px;"></div>
<span class="t" style="left:1027.6px;top:1100.0px;font-size:26.78px;color:#1c2b34;transform:scaleX(1.0367);">customers.json</span>
<span class="t" style="left:1675.1px;top:1100.0px;font-size:26.78px;color:#1c2b34;transform:scaleX(0.9866);">655 ms</span>
<svg class="a" style="left:1602.1px;top:1096.2px;" width="32" height="28" viewBox="0 0 32 28"><rect x="0" y="0" width="31.7" height="3.6" fill="#1c2b34"/><rect x="0" y="8.1" width="5.6" height="3.6" fill="#1c2b34"/><rect x="10.1" y="8.1" width="21.6" height="3.6" fill="#1c2b34"/><rect x="10.1" y="16.1" width="11.5" height="3.6" fill="#1c2b34"/><rect x="26.1" y="16.1" width="5.6" height="3.6" fill="#1c2b34"/><rect x="15.9" y="24" width="5.7" height="3.6" fill="#1c2b34"/></svg>
<div class="a" style="left:1849.6px;top:783px;width:2px;height:47px;background:#4a8fc0;"></div>
<div class="a" style="left:1849.6px;top:833px;width:2px;height:47px;background:#4a8fc0;"></div>
<div class="a" style="left:1849.6px;top:883px;width:4.4px;height:47px;background:#4b9ac9;"></div>
<div class="a" style="left:1898px;top:933px;width:1.6px;height:47px;background:#4a8fc0;"></div>
<div class="a" style="left:1926px;top:984px;width:380px;height:47.5px;background:#05529c;"></div>
<div class="a" style="left:2310.1px;top:1036.4px;width:385.7px;height:47.4px;background:#05529c;border:2px solid #e36c7d;"></div>
<svg class="a" style="left:2312px;top:1038.3px;" width="32" height="32" viewBox="0 0 32 32"><path d="M0 0 H32 L0 32 Z" fill="#ee6d7c"/></svg>
<span class="t" style="left:2313.1px;top:1042.0px;font-size:17.51px;color:#fff;font-weight:700;transform:scaleX(1.0000);">!</span>
<div class="a" style="left:2698px;top:1088px;width:377.6px;height:47.8px;background:#05529c;"></div>
<div class="a" style="left:978px;top:1170px;width:2141px;height:87.7px;background:#f2f4f4;"></div>
<span class="t" style="left:993.8px;top:1203.0px;font-size:26.78px;color:#1c2b34;transform:scaleX(1.0218);">Displaying 7 out of 7 events</span>
<div class="a" style="left:1346.4px;top:1207.7px;width:3px;height:33.7px;background:#d0d4d6;"></div>
<div class="a" style="left:1366.8px;top:1186.3px;width:332.5px;height:55px;background:#fff;border:2px solid #dadee0;border-radius:7px;"></div>
<span class="t" style="left:1383.8px;top:1203.0px;font-size:26.78px;color:#8b969a;transform:scaleX(1.0164);">See full list of events</span>
<svg class="a" style="left:1663px;top:1210px;" width="18" height="10" viewBox="0 0 18 10"><path d="M0.5 0.5 H17.5 L9 9.5 Z" fill="#5f6d72"/></svg>
<span class="t" style="left:1714.2px;top:1203.0px;font-size:26.78px;color:#1c2b34;transform:scaleX(1.0288);">for this View in the RUM explorer</span>
<svg class="a" style="left:20px;top:4px;" width="60" height="66" viewBox="0 0 60 66"><g transform="translate(-20,-4)">
<path d="M34.5 10.5 L38.8 12.9 L43.1 11.3 L48.5 10.0 L53.9 8.6 L57.1 7.8 L61.5 10.8 L64.2 16.7 L62.0 18.1 L60.9 20.5 L63.6 28.0 L64.2 32.3 L63.1 35.8 L59.3 37.7 L56.6 40.2 L51.8 41.2 L45.8 41.0 L45.3 55.0 L43.1 58.2 L41.0 63.6 L36.7 65.5 L31.8 62.0 L28.0 56.6 L28.6 51.8 L32.3 48.5 L35.6 47.4 L37.7 43.1 L37.2 37.7 L32.3 32.3 L31.3 27.0 L34.5 25.9 L30.2 25.3 L26.4 22.6 L25.1 17.8 L27.0 12.9 L30.2 10.8 Z" fill="#e7e7e9" stroke="#e7e7e9" stroke-width="1.6" stroke-linejoin="round"/>
<path d="M35.0 11.1 Q38.5 18.3 35.3 25.1" fill="none" stroke="#3d3a43" stroke-width="1.3"/>
<path d="M54.7 13.5 L58.3 16.2 M57.3 9.4 Q59.3 12.4 58.4 16.1" fill="none" stroke="#3d3a43" stroke-width="1"/>
<path d="M35.0 49.2 Q42.6 50.4 43.6 56.6" fill="none" stroke="#3d3a43" stroke-width="1.2"/>
<path d="M44.2 41.0 L73.9 36.9 L75.5 56.1 L48.0 61.5 Z" fill="#e7e7e9" stroke="#3d3a43" stroke-width="1.2"/>
<path d="M49.6 58.5 L53.9 50.9 L58.2 52.6 L63.1 45.0 L68.5 48.0 L72.0 41.5 L73.3 54.4 Z" fill="#3d3a43"/>
<ellipse cx="45.6" cy="24.7" rx="2.7" ry="2" transform="rotate(-25 45.6 24.7)" fill="#3d3a43"/>
<ellipse cx="58.5" cy="22.1" rx="1.5" ry="2.2" transform="rotate(-25 58.5 22.1)" fill="#3d3a43"/>
<path d="M56.1 31.5 Q58.8 29.9 61.5 31.2 Q60.4 34.5 58.5 34.5 Q56.6 33.7 56.1 31.5 Z" fill="#3d3a43"/>
<path d="M43.7 36.1 Q48.5 41.0 55.5 40.2 Q58.2 39.4 59.3 37.2" fill="none" stroke="#3d3a43" stroke-width="1.1"/>
</g></svg>
<svg class="a" style="left:31.8px;top:316.5px;" width="32" height="32" viewBox="0 0 32 32"><circle cx="13" cy="12.5" r="9.3" fill="none" stroke="#aaa7ae" stroke-width="5"/><path d="M20.5 20 L29 28.5" stroke="#aaa7ae" stroke-width="5" stroke-linecap="round"/></svg>
<svg class="a" style="left:31.8px;top:387.5px;" width="32" height="32" viewBox="0 0 32 32"><path d="M6.5 1 H13 V5 H6.5 Z M19 1 H25.5 V5 H19 Z" fill="#aaa7ae"/><path d="M6 6 H14 V12 H18 V6 H26 L31.5 24 V31 H19.5 V24 Q16 20 12.5 24 V31 H0.5 V24 Z" fill="#aaa7ae"/></svg>
<svg class="a" style="left:31.8px;top:459.5px;" width="32" height="32" viewBox="0 0 32 32"><rect x="0.5" y="4" width="31" height="24" rx="3" fill="#aaa7ae"/><rect x="3.5" y="10" width="25" height="15" fill="#38343e"/><rect x="5.5" y="11.6" width="3" height="2.6" fill="#aaa7ae"/><rect x="10.5" y="11.6" width="16" height="2.6" fill="#aaa7ae"/><rect x="5.5" y="16.2" width="3" height="2.6" fill="#aaa7ae"/><rect x="10.5" y="16.2" width="16" height="2.6" fill="#aaa7ae"/><rect x="5.5" y="20.8" width="3" height="2.6" fill="#aaa7ae"/><rect x="10.5" y="20.8" width="16" height="2.6" fill="#aaa7ae"/></svg>
<svg class="a" style="left:31.8px;top:531.5px;" width="32" height="32" viewBox="0 0 32 32"><path d="M1.5 3 V29.5 H31" fill="none" stroke="#aaa7ae" stroke-width="2.4"/><path d="M5 26 V16 L12 7 L19.5 15 L26.5 10 L29.5 26 Z" fill="#aaa7ae"/></svg>
<svg class="a" style="left:31.8px;top:603.5px;" width="32" height="32" viewBox="0 0 32 32"><polygon points="7.5,2.4 14.1,6.2 14.1,13.8 7.5,17.6 0.9,13.8 0.9,6.2" fill="#aaa7ae"/><polygon points="16.0,16.4 22.6,20.2 22.6,27.8 16.0,31.6 9.4,27.8 9.4,20.2" fill="#aaa7ae"/><polygon points="24.5,3.4 30.2,6.7 30.2,13.3 24.5,16.6 18.8,13.3 18.8,6.7" fill="none" stroke="#aaa7ae" stroke-width="1.6"/></svg>
<svg class="a" style="left:31.8px;top:675.5px;" width="32" height="32" viewBox="0 0 32 32"><circle cx="16" cy="16" r="14" fill="#aaa7ae"/><rect x="13.8" y="7" width="4.4" height="11.5" fill="#332e39"/><rect x="13.8" y="21" width="4.4" height="4.2" fill="#332e39"/></svg>
<svg class="a" style="left:31.8px;top:747.5px;" width="32" height="32" viewBox="0 0 32 32"><path d="M3.5 27 A14 14 0 0 1 13 6.5" fill="none" stroke="#aaa7ae" stroke-width="3.6" stroke-dasharray="4.2 2.6"/><path d="M24.5 10 A14 14 0 0 1 28.5 27" fill="none" stroke="#aaa7ae" stroke-width="4"/><path d="M23.5 3 L20 21.5 Q18 26 14.5 24 Q12 21.5 14 18.5 Z" fill="#aaa7ae"/></svg>
<svg class="a" style="left:31.8px;top:820.5px;" width="32" height="32" viewBox="0 0 32 32"><path d="M1 9 H8 Q6.5 2 11 2 Q15.5 2 14 9 H22 V15 Q28 13 28.5 18 Q28 23 22 21 V29 H14.5 Q16 23.5 11.5 23.5 Q7 23.5 8.5 29 H1 Z" fill="#aaa7ae"/></svg>
<svg class="a" style="left:31.8px;top:891.5px;" width="32" height="32" viewBox="0 0 32 32"><rect x="0.5" y="4" width="31" height="3.2" fill="#aaa7ae"/><rect x="0.5" y="11.5" width="5" height="3.2" fill="#aaa7ae"/><rect x="7.5" y="11.5" width="24" height="3.2" fill="#aaa7ae"/><rect x="9.5" y="19" width="12" height="3.2" fill="#aaa7ae"/><rect x="23.5" y="19" width="8" height="3.2" fill="#aaa7ae"/><rect x="14" y="26.5" width="6" height="3.2" fill="#aaa7ae"/></svg>
<svg class="a" style="left:31.8px;top:964px;" width="32" height="32" viewBox="0 0 32 32"><path d="M9 2 H29 Q31 2 30.3 4.5 L25.5 24 Q25 26 23 26 H5 Q2.5 26 3 23.5 L6.8 4.5 Q7.4 2 9 2 Z" fill="#aaa7ae"/><path d="M2 24 Q1 30 6 30 H23 Q26 30 26.8 27" fill="none" stroke="#aaa7ae" stroke-width="2.2"/><rect x="11.5" y="6.5" width="12" height="2" fill="#2a2230" transform="skewX(-12)"/><rect x="12.3" y="10.3" width="12" height="2" fill="#2a2230" transform="skewX(-12)"/></svg>
<svg class="a" style="left:31.8px;top:1039px;" width="32" height="32" viewBox="0 0 32 32"><rect x="1" y="0" width="5" height="3.2" fill="#aaa7ae"/><rect x="8" y="0" width="6" height="3.2" fill="#aaa7ae"/><rect x="16" y="0" width="8" height="3.2" fill="#aaa7ae"/><rect x="1" y="7" width="5" height="3.2" fill="#aaa7ae"/><rect x="8" y="7" width="4" height="3.2" fill="#aaa7ae"/><rect x="1" y="14" width="5" height="3.2" fill="#aaa7ae"/><rect x="1" y="21" width="5" height="3.2" fill="#aaa7ae"/><circle cx="20.5" cy="15.5" r="8" fill="none" stroke="#aaa7ae" stroke-width="3.4"/><path d="M14.5 22 L8 29" stroke="#aaa7ae" stroke-width="4" stroke-linecap="round"/><path d="M17 17 L20.5 13 L24 17 Z" fill="#aaa7ae"/></svg>
<svg class="a" style="left:31.8px;top:1107.5px;" width="32" height="32" viewBox="0 0 32 32"><path d="M16 2.5 Q9 6 3 6 Q2 22 16 29.5 Q30 22 29 6 Q23 6 16 2.5 Z" fill="none" stroke="#aaa7ae" stroke-width="3"/><path d="M16 7.5 V25 Q7.5 19.5 7.5 10 Q12 9.5 16 7.5 Z" fill="#aaa7ae"/></svg>
<svg class="a" style="left:31.8px;top:1178px;" width="32" height="32" viewBox="0 0 32 32"><circle cx="16" cy="16" r="10.5" fill="#ffffff"/><path d="M16 5.5 V26.5 M5.5 16 H26.5 M8 9.5 Q16 13.5 24 9.5 M8 22.5 Q16 18.500 24 22.5" stroke="#231a2a" stroke-width="1.5" fill="none"/><ellipse cx="16" cy="16" rx="5" ry="10.5" fill="none" stroke="#231a2a" stroke-width="1.5"/><polygon points="16.0,1.2 28.8,8.6 28.8,23.4 16.0,30.8 3.2,23.4 3.2,8.6" fill="none" stroke="#ffffff" stroke-width="1.2"/><circle cx="16.0" cy="1.2" r="2.1" fill="#ffffff"/><circle cx="28.8" cy="8.6" r="2.1" fill="#ffffff"/><circle cx="28.8" cy="23.4" r="2.1" fill="#ffffff"/><circle cx="16.0" cy="30.8" r="2.1" fill="#ffffff"/><circle cx="3.2" cy="23.4" r="2.1" fill="#ffffff"/><circle cx="3.2" cy="8.6" r="2.1" fill="#ffffff"/></svg>
<svg class="a" style="left:31.8px;top:1607px;" width="32" height="32" viewBox="0 0 32 32"><path d="M16 4 C25 4 31 9 31 15 C31 21 25 26 16 26 C14 26 12.3 25.8 10.8 25.3 C8 28 4.5 29 2.5 29 C4.5 27 5.5 24.5 5.5 22.5 C2.5 20.5 1 18 1 15 C1 9 7 4 16 4 Z" fill="#8f8b94"/></svg>
<svg class="a" style="left:31.8px;top:1679.5px;" width="32" height="32" viewBox="0 0 32 32"><circle cx="16" cy="16" r="14" fill="#8f8b94"/><path d="M11 12 Q11 7.5 16 7.5 Q21.5 7.5 21.5 12 Q21.500 15 17.8 16.3 Q16.5 17 16.5 19.5" fill="none" stroke="#1a1020" stroke-width="3.4"/><rect x="14.6" y="21.8" width="3.8" height="3.8" fill="#1a1020"/></svg>
<svg class="a" style="left:31.8px;top:1752.5px;" width="32" height="32" viewBox="0 0 32 32"><circle cx="20.5" cy="9.5" r="5.6" fill="#8f8b94"/><path d="M10.5 27 Q11 17 20.5 16 Q30.5 17 31 27 Z" fill="#8f8b94"/><circle cx="11.500" cy="9" r="6.2" fill="#8f8b94" stroke="#160c1e" stroke-width="1.4"/><path d="M0.5 27.5 Q1 17 11.5 16 Q22 17 22.5 27.5 Z" fill="#8f8b94" stroke="#160c1e" stroke-width="1.4"/></svg>
<svg class="a" style="left:27.8px;top:1820px;" width="40" height="40" viewBox="0 0 40 40"><clipPath id="avc"><circle cx="20" cy="20" r="19.8"/></clipPath><g clip-path="url(#avc)"><rect width="40" height="40" fill="#0f3540"/><g fill="#35d3e6"><rect x="11" y="3" width="7" height="7"/><rect x="22" y="3" width="7" height="7"/><rect x="4" y="10" width="32" height="14"/><rect x="4" y="24" width="12" height="10"/><rect x="24" y="24" width="12" height="10"/><rect x="16" y="24" width="8" height="4"/><rect x="0" y="14" width="4" height="6"/><rect x="36" y="14" width="4" height="6"/></g><g fill="#0f3540"><rect x="11" y="16" width="5" height="4"/><rect x="24" y="16" width="5" height="4"/><rect x="17" y="20" width="6" height="3"/><rect x="14" y="23" width="3" height="3"/><rect x="23" y="23" width="3" height="3"/></g></g></svg>
<svg class="a" style="left:131px;top:22px;" width="46" height="44" viewBox="0 0 46 44"><g fill="none" stroke="#5c6c71" stroke-width="3.3"><path d="M12.15 8.4 V3.5 H41.3 V25.7 H30.2"/><path d="M8.45 19.7 V14.8 H25.1 V36.7 H17.4"/><rect x="3.75" y="25.7" width="8.35" height="14.5"/></g></svg>
<svg class="a" style="left:162px;top:144px;" width="33" height="29" viewBox="0 0 33 29"><rect x="0" y="0.4" width="4.6" height="4.2" fill="#fff"/><rect x="7.8" y="0.4" width="24.5" height="4.2" fill="#fff"/><rect x="0" y="8.2" width="4.6" height="4.2" fill="#fff"/><rect x="7.8" y="8.2" width="24.5" height="4.2" fill="#fff"/><rect x="0" y="16" width="4.6" height="4.2" fill="#fff"/><rect x="7.8" y="16" width="24.5" height="4.2" fill="#fff"/><rect x="0" y="23.8" width="4.6" height="4.2" fill="#fff"/><rect x="7.8" y="23.8" width="24.5" height="4.2" fill="#fff"/></svg>
<svg class="a" style="left:361px;top:146px;" width="34" height="25" viewBox="0 0 34 25"><path d="M1.5 0.5 V23 H33" fill="none" stroke="#5f6d72" stroke-width="2.2"/><path d="M6 19 L13.5 10.5 L18.5 14.500 L28 4.5" fill="none" stroke="#5f6d72" stroke-width="3.2"/><path d="M22.500 2.500 H31 V11 Z" fill="#5f6d72"/></svg>
<svg class="a" style="left:578px;top:142.5px;" width="32" height="32" viewBox="0 0 32 32"><circle cx="12.80" cy="12.80" r="10.88" fill="none" stroke="#8b9799" stroke-width="4.6"/><path d="M21.29 21.29 L29.20 29.20" stroke="#8b9799" stroke-width="4.6" stroke-linecap="round"/></svg>
<svg class="a" style="left:148px;top:256px;" width="28" height="28" viewBox="0 0 28 28"><circle cx="11.20" cy="11.20" r="9.52" fill="none" stroke="#8b9799" stroke-width="4.2"/><path d="M18.63 18.63 L25.40 25.40" stroke="#8b9799" stroke-width="4.2" stroke-linecap="round"/></svg>
<svg class="a" style="left:164.5px;top:1540px;" width="24" height="24" viewBox="0 0 24 24"><circle cx="9.60" cy="9.60" r="8.16" fill="none" stroke="#8b9799" stroke-width="3.6"/><path d="M15.96 15.96 L21.70 21.70" stroke="#8b9799" stroke-width="3.6" stroke-linecap="round"/></svg>
<svg class="a" style="left:994px;top:600.5px;" width="27.5" height="27.5" viewBox="0 0 27.5 27.5"><circle cx="11.00" cy="11.00" r="9.35" fill="none" stroke="#8b9799" stroke-width="4.2"/><path d="M18.29 18.29 L24.90 24.90" stroke="#8b9799" stroke-width="4.2" stroke-linecap="round"/></svg>
<div class="a" style="left:491.9px;top:267.2px;width:24.2px;height:5.6px;background:#0a66b7;border-radius:1px;"></div>
<div class="a" style="left:501.2px;top:258px;width:5.6px;height:24.2px;background:#0a66b7;border-radius:1px;"></div>
<svg class="a" style="left:655.3px;top:645.9px;" width="30" height="29" viewBox="0 0 30 29"><clipPath id="hcc"><rect x="2.6" y="2.6" width="7.8" height="23.2"/></clipPath><g clip-path="url(#hcc)" stroke="#6f9fca" stroke-width="1" fill="none"><path d="M2.8 6.0 L10.4 -1.2" /><path d="M2.8 8.3 L10.4 1.1" /><path d="M2.8 10.6 L10.4 3.4" /><path d="M2.8 12.9 L10.4 5.7" /><path d="M2.8 15.2 L10.4 8.0" /><path d="M2.8 17.5 L10.4 10.3" /><path d="M2.8 19.8 L10.4 12.6" /><path d="M2.8 22.1 L10.4 14.9" /><path d="M2.8 24.4 L10.4 17.2" /><path d="M2.8 26.7 L10.4 19.5" /><path d="M2.8 29.0 L10.4 21.8" /><path d="M2.8 31.3 L10.4 24.1" /><path d="M2.8 33.6 L10.4 26.4" /></g><rect x="1.6" y="1.6" width="26.4" height="25.4" rx="2.6" fill="none" stroke="#0a66b7" stroke-width="2.1"/><path d="M21.6 8.8 L15.2 14.3 L21.6 19.9" fill="none" stroke="#0a66b7" stroke-width="2.5" stroke-linecap="butt" stroke-linejoin="miter"/></svg>
<svg class="a" style="left:987.3px;top:113.2px;" width="25" height="25" viewBox="0 0 25 25"><g fill="none" stroke="#17386f" stroke-width="1.7"><circle cx="12.5" cy="12.5" r="11"/><ellipse cx="12.5" cy="12.5" rx="5" ry="11"/><path d="M12.5 1.5 V23.5 M1.5 12.5 H23.5 M3.2 6.6 H21.8 M3.2 18.4 H21.8"/></g></svg>
<svg class="a" style="left:1589.7px;top:109.2px;" width="33" height="33" viewBox="0 0 33 33"><circle cx="16.5" cy="16.5" r="16" fill="#fff"/>
<path d="M16.5 16.500 L2.640 8.500 A16 16 0 0 1 30.360 8.500 Z" fill="#e8453c"/>
<path d="M16.5 16.500 L30.360 8.500 A16 16 0 0 1 16.500 32.500 Z" fill="#fbc116"/>
<path d="M16.5 16.500 L16.500 32.500 A16 16 0 0 1 2.640 8.500 Z" fill="#34a452"/>
<circle cx="16.5" cy="16.5" r="7.4" fill="#fff"/><circle cx="16.5" cy="16.5" r="5.9" fill="#4688f1"/></svg>
<svg class="a" style="left:1758px;top:110.5px;" width="32" height="32" viewBox="0 0 32 32"><path d="M16 0.5 C21.5 0.5 23.5 5 23.5 10.5 C23.500 16 27 19 29.500 24 C31 27 31 29.500 30.500 31.500 H1.500 C1 29.500 1 27 2.500 24 C5 19 8.500 16 8.500 10.500 C8.500 5 10.500 0.500 16 0.500 Z" fill="#141414"/>
<ellipse cx="16" cy="28.500" rx="6.500" ry="5" fill="#f2f2f2"/>
<ellipse cx="12.800" cy="14.300" rx="2.500" ry="3" fill="#fff"/><ellipse cx="19.200" cy="14.300" rx="2.500" ry="3" fill="#fff"/>
<circle cx="13.400" cy="14.800" r="1.200" fill="#141414"/><circle cx="18.600" cy="14.800" r="1.200" fill="#141414"/>
<path d="M9.500 20.500 Q16 15.500 22.500 20.500 Q16 26.500 9.500 20.500 Z" fill="#f6c21c" stroke="#c9920e" stroke-width="0.600"/></svg>
<svg class="a" style="left:1893.5px;top:118.5px;" width="24" height="16" viewBox="0 0 24 16"><rect width="24" height="16" fill="#1b2f7a"/><path d="M0 0 L12 8 M12 0 L0 8" stroke="#fff" stroke-width="1.800"/><path d="M0 0 L12 8 M12 0 L0 8" stroke="#d8283a" stroke-width="0.700"/><path d="M6 0 V8 M0 4 H12" stroke="#fff" stroke-width="2.600"/><path d="M6 0 V8 M0 4 H12" stroke="#d8283a" stroke-width="1.400"/>
<circle cx="6" cy="12.200" r="1.500" fill="#fff"/><circle cx="18.500" cy="3.200" r="0.9" fill="#fff"/><circle cx="21.200" cy="6.800" r="0.9" fill="#fff"/><circle cx="16" cy="7.500" r="0.9" fill="#fff"/><circle cx="18.500" cy="12.800" r="0.9" fill="#fff"/></svg>
</body></html>
